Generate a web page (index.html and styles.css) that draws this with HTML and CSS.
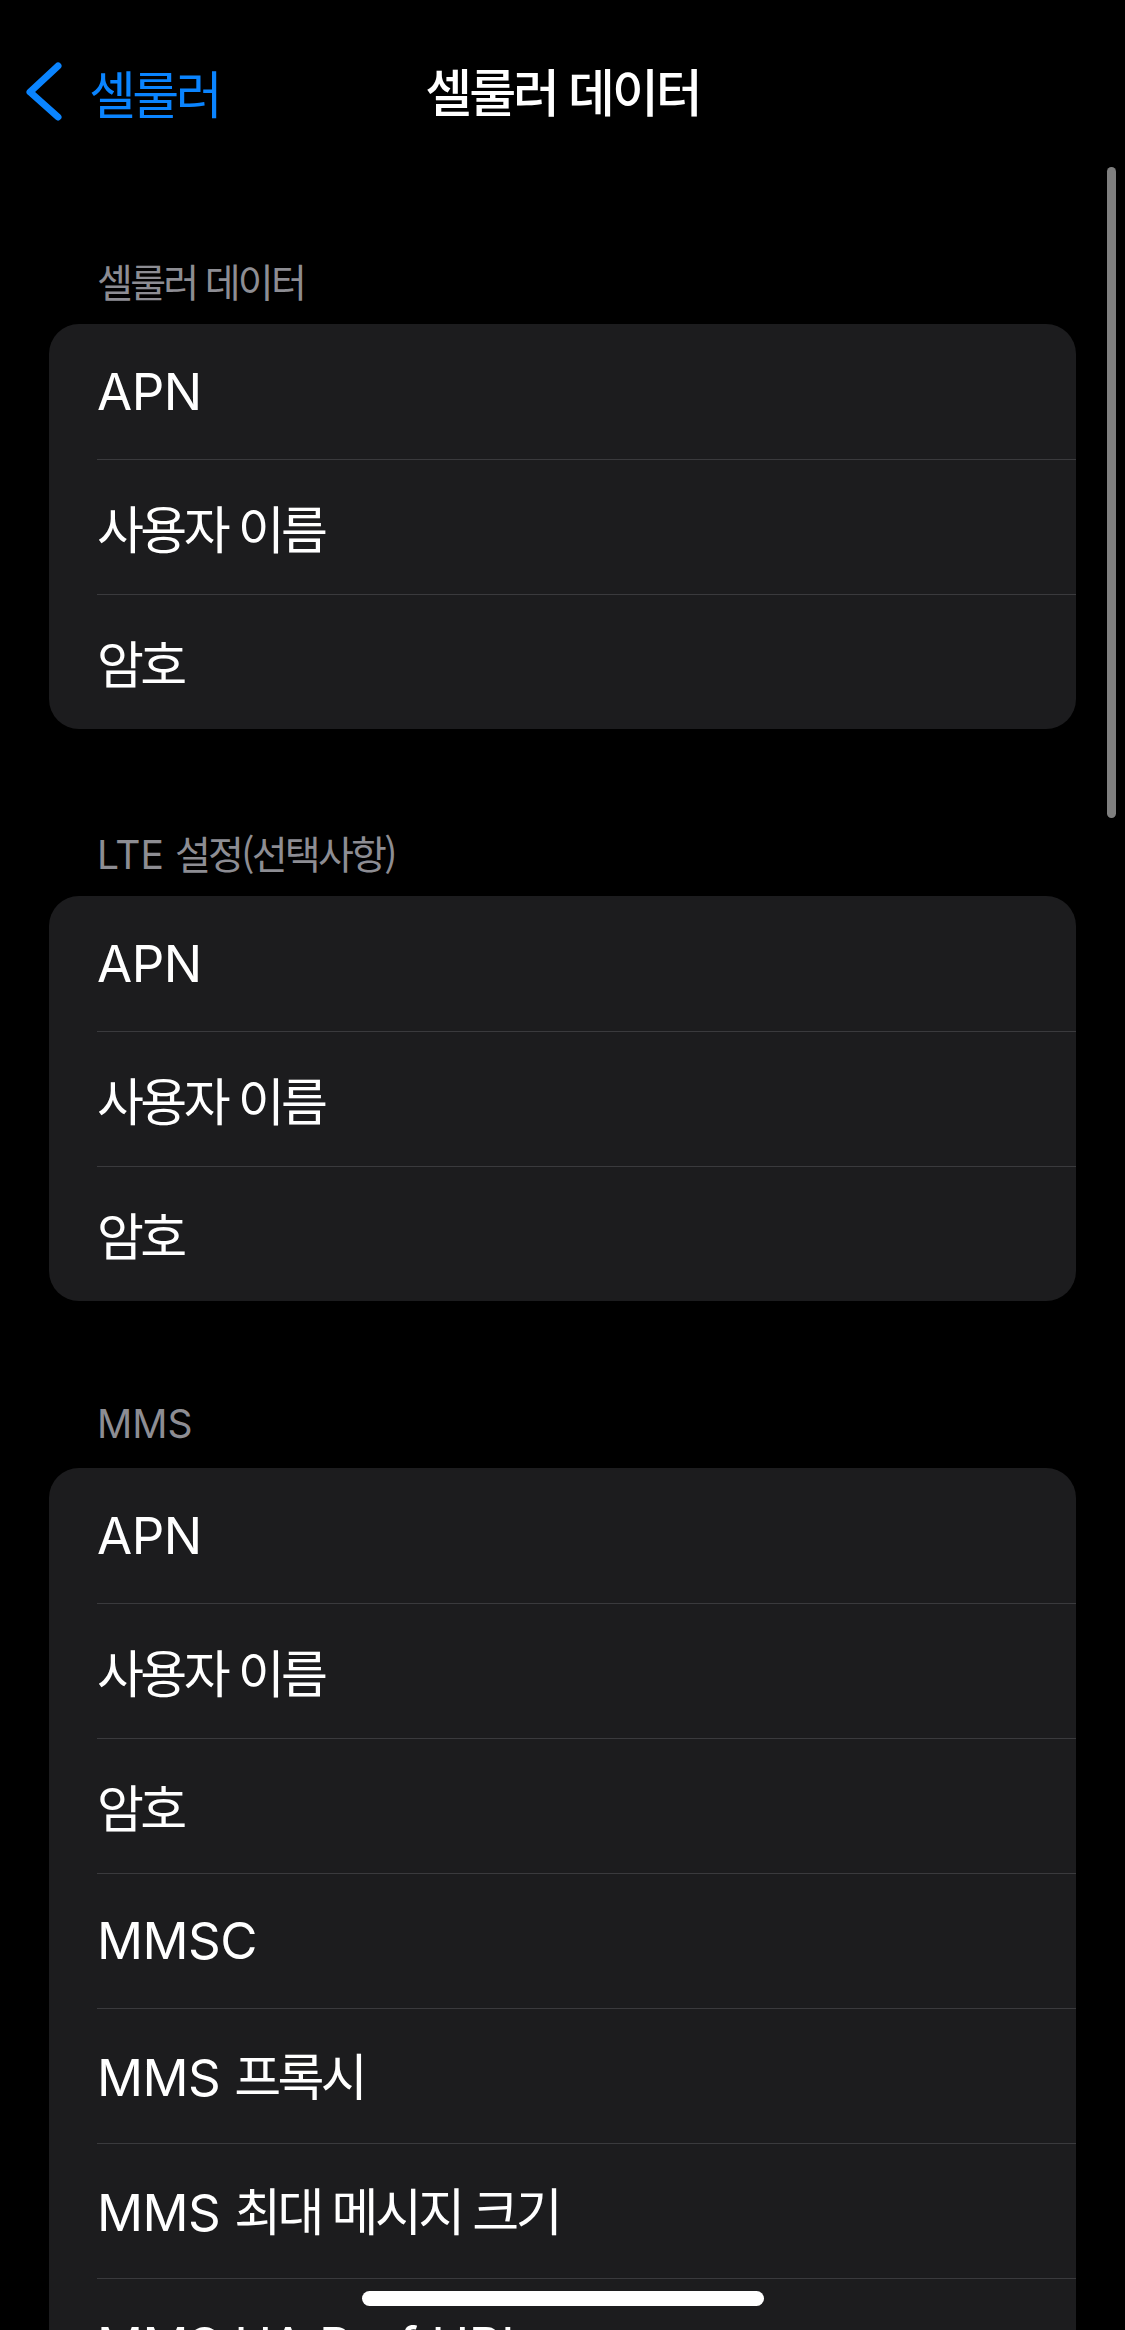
FILE: index.html
```html
<!DOCTYPE html>
<html lang="ko">
<head>
    <meta charset="UTF-8">
    <meta name="viewport" content="width=device-width, initial-scale=1.0">
    <title>셀룰러 데이터</title>
    <link rel="stylesheet" href="styles.css">
</head>
<body>
<div class="screen">

    <header class="navbar">
        <a class="back" href="#">
            <svg class="chevron" width="48" height="68" viewBox="0 0 48 68">
                <polyline points="38,8 10,34 38,59" fill="none" stroke="#0a84ff" stroke-width="7" stroke-linecap="round" stroke-linejoin="round"/>
            </svg>
            <span class="ko">셀룰러</span>
        </a>
        <h1 class="title"><span class="ko">셀룰러 데이터</span></h1>
        <div></div>
    </header>

    <main class="list">
        <section class="section">
            <h2 class="section-header"><span class="ko">셀룰러 데이터</span></h2>
            <ul class="group">
                <li class="row"><span>APN</span></li>
                <li class="row"><span class="ko">사용자 이름</span></li>
                <li class="row"><span class="ko">암호</span></li>
            </ul>
        </section>

        <section class="section">
            <h2 class="section-header">LTE <span class="ko">설정(선택사항)</span></h2>
            <ul class="group">
                <li class="row"><span>APN</span></li>
                <li class="row"><span class="ko">사용자 이름</span></li>
                <li class="row"><span class="ko">암호</span></li>
            </ul>
        </section>

        <section class="section">
            <h2 class="section-header">MMS</h2>
            <ul class="group">
                <li class="row"><span>APN</span></li>
                <li class="row"><span class="ko">사용자 이름</span></li>
                <li class="row"><span class="ko">암호</span></li>
                <li class="row"><span>MMSC</span></li>
                <li class="row"><span>MMS <span class="ko">프록시</span></span></li>
                <li class="row"><span>MMS <span class="ko">최대 메시지 크기</span></span></li>
                <li class="row"><span>MMS UA Prof URL</span></li>
            </ul>
        </section>
    </main>

    <!-- overlays -->
    <div class="scroll-indicator"></div>
    <div class="home-indicator"></div>
</div>
</body>
</html>
```

FILE: styles.css
```css
body {
    margin: 0;
    padding: 0;
    background-color: #000;
    color: #fff;
    font-family: "Inter", "Noto Sans CJK KR", sans-serif;
}

.screen {
    position: relative;
    height: 2330px;
    overflow: hidden;
}

/* korean glyphs from Noto are wider than the system font */
.ko {
    font-family: "Noto Sans CJK KR", sans-serif;
    letter-spacing: -0.07em;
}

.navbar {
    display: grid;
    grid-template-columns: 1fr auto 1fr;
    align-items: center;
    height: 184px;
}

.back {
    display: flex;
    align-items: center;
    gap: 21px;
    padding-left: 20px;
    color: #0a84ff;
    font-size: 51px;
    text-decoration: none;
    line-height: 68px;
}

.chevron {
    display: block;
}

.title {
    margin: 0;
    font-size: 51px;
    font-weight: 500;
    line-height: 68px;
}

.title .ko {
    letter-spacing: -0.06em;
}

.list {
    padding: 73px 49px 0;
}

.section + .section {
    margin-top: 100px;
}

.section-header {
    height: 46px;
    margin: 0 0 21px;
    padding-left: 48px;
    font-size: 39px;
    font-weight: 400;
    line-height: 46px;
    color: #8d8d93;
}

.group {
    list-style: none;
    margin: 0;
    padding: 0 0 0 48px;
    background-color: #1c1c1e;
    border-radius: 30px;
}

.row {
    display: flex;
    align-items: center;
    height: 135px;
    box-sizing: border-box;
    font-size: 51px;
    line-height: 60px;
    letter-spacing: -0.01em;
}

.row + .row {
    border-top: 1px solid #3a3a3d;
}

.scroll-indicator {
    position: absolute;
    top: 167px;
    left: 1107px;
    width: 9px;
    height: 651px;
    border-radius: 5px;
    background-color: #7f7f7f;
}

.home-indicator {
    position: absolute;
    top: 2291px;
    left: 362px;
    width: 402px;
    height: 15px;
    border-radius: 8px;
    background-color: #fff;
}
```
